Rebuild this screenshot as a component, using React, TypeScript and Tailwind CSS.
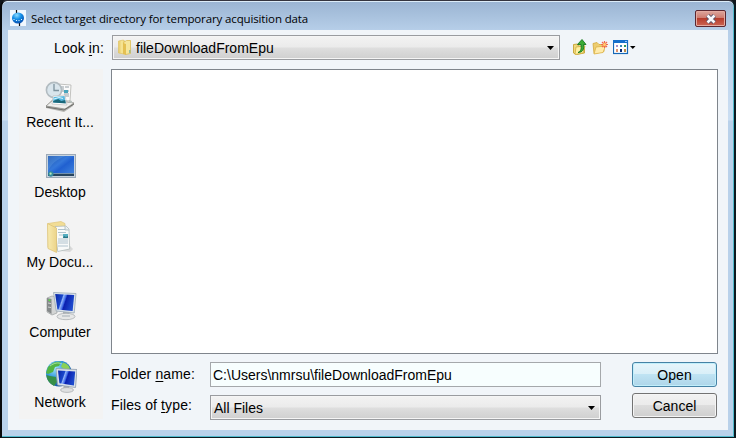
import React from "react";

const ARIAL = "font-['Liberation_Sans',Arial,sans-serif]";

function AppIcon() {
  return (
    <svg width="16" height="16" viewBox="0 0 16 16">
      <defs>
        <radialGradient id="ball" cx=".4" cy=".25" r=".8">
          <stop offset="0" stopColor="#8fdcff" />
          <stop offset=".45" stopColor="#1590e8" />
          <stop offset="1" stopColor="#0545a8" />
        </radialGradient>
      </defs>
      <rect width="16" height="16" fill="#f1f8ff" />
      <path d="M6.5 0v4M9.5 12v4" stroke="#111" strokeWidth="1.2" />
      <ellipse cx="8" cy="8" rx="6" ry="5.6" fill="url(#ball)" />
      <path d="M3.5 9.5h1M6 10.5h1M8.5 10.5h1M11 9.5h1" stroke="#e6f8ff" />
    </svg>
  );
}

function FolderIcon() {
  return (
    <svg width="16" height="18" viewBox="0 0 16 18">
      <defs>
        <linearGradient id="fold" x1="0" x2="1">
          <stop offset="0" stopColor="#e6c967" />
          <stop offset=".6" stopColor="#f8e89a" />
          <stop offset="1" stopColor="#e3c663" />
        </linearGradient>
      </defs>
      <path d="M1.5 2l5-1 1 1v13l-6-1z" fill="url(#fold)" stroke="#e1c464" strokeWidth=".7" />
      <path d="M6.5 3.5l3-2h4v13l-5 1z" fill="#f6e69b" stroke="#dcbd55" strokeWidth=".8" />
      <path d="M6 4v11l3 1V5z" fill="#e4c052" />
      <path d="M12.8 11v3" stroke="#6fae9f" />
    </svg>
  );
}

function RecentIcon() {
  return (
    <svg width="32" height="32" viewBox="0 0 32 32">
      <path d="M1 25l7-7 21 4-1 3-9 6L1 27z" fill="#b5b5b2" />
      <path d="M1 25l7-6 21 3-9 6z" fill="#f0f0ee" stroke="#85857f" strokeWidth=".7" />
      <path d="M1 26l18 3 10-6" fill="none" stroke="#6f6f6c" strokeWidth="1" />
      <path d="M13 3l13 1-1 16-13-1z" fill="#fafafa" stroke="#aaaaa6" strokeWidth=".7" />
      <path d="M15 6h4M15 8h4M20 6h4M15 10h9M19 13h5M20 15h4" stroke="#8a969e" strokeWidth=".9" />
      <path d="M19 9h4v3h-4z" fill="#48a5bd" />
      <circle cx="9" cy="9" r="7.6" fill="#d9e5ec" stroke="#b2bbc0" strokeWidth="1.6" />
      <path d="M9 3v6.5h5" stroke="#7d929d" strokeWidth="1.3" fill="none" />
      <path d="M8 15l12-1 2 10-15-1z" fill="#fff" stroke="#aaa" strokeWidth=".5" />
      <path d="M8.6 16l11-1 1 7-12.5-.5z" fill="#59b8df" />
      <path d="M8.2 20l5-2 3 2 4-1 .7 3.6-12.8-1z" fill="#1b687a" />
      <path d="M9 18l5-1.5 4 1" stroke="#d9f5ff" fill="none" />
      <path d="M24 19l3 1v2l-3-.5z" fill="#b9c2bf" />
    </svg>
  );
}

function DesktopIcon() {
  return (
    <svg width="32" height="32" viewBox="0 0 32 32">
      <defs>
        <linearGradient id="desk" x1="0" y1="0" x2="1" y2="1">
          <stop offset="0" stopColor="#1d52ad" />
          <stop offset=".4" stopColor="#3578da" />
          <stop offset=".55" stopColor="#2060d0" />
          <stop offset="1" stopColor="#4387df" />
        </linearGradient>
      </defs>
      <rect x="1.5" y="3.5" width="29" height="23" fill="#c8d4df" stroke="#9ca9b7" />
      <rect x="3" y="5" width="26" height="20" fill="url(#desk)" />
      <path d="M3 20V5h18C12 8 6 13 3 20z" fill="#79b6ef" opacity=".25" />
      <rect x="3" y="22" width="26" height="3" fill="#26445e" />
      <path d="M8 22.5h21" stroke="#7291ad" />
      <circle cx="5.8" cy="23" r="2.7" fill="#348b9e" />
      <circle cx="5.6" cy="22.7" r="1.1" fill="#b6e8b9" />
    </svg>
  );
}

function DocumentsIcon() {
  return (
    <svg width="32" height="32" viewBox="0 0 32 32">
      <defs>
        <linearGradient id="docs" x1="0" x2="1">
          <stop offset="0" stopColor="#f8ebb0" />
          <stop offset="1" stopColor="#ecd48a" />
        </linearGradient>
      </defs>
      <path d="M8 29l17 2 3-3-3-3z" fill="#c9c9c9" opacity=".6" />
      <path d="M3 2.5l13-2 4 2v23l-9 3-8-2z" fill="#f2dd95" stroke="#dfc67d" strokeWidth=".7" />
      <path d="M10 5.5l11-.5 3 3 .7 20-12 2.5z" fill="#f8faf9" stroke="#a9b4b5" strokeWidth=".7" />
      <path d="M13 8.5h7M13 11.5h8M14 14h4M13 18h10M13 20h10M13 22h10M13 25h10" stroke="#a8bdc8" strokeWidth=".9" />
      <path d="M18 13h5v4h-5z" fill="#55aec0" />
      <path d="M19 15l2 1 2-1v2h-5z" fill="#287585" />
      <path d="M20 5v4h4" fill="#e4ecee" stroke="#a5b1b5" strokeWidth=".7" />
      <path d="M2.5 2.5l9 4.5V31.5l-8.5-4z" fill="url(#docs)" stroke="#dbc073" strokeWidth=".7" />
    </svg>
  );
}

function ScreenDefs() {
  return (
    <svg width="0" height="0" className="absolute">
      <defs>
        <linearGradient id="screen" x1="0" y1="0" x2="1" y2=".3">
          <stop offset="0" stopColor="#0824a5" />
          <stop offset=".38" stopColor="#1a48cc" />
          <stop offset=".44" stopColor="#94b5f8" />
          <stop offset=".55" stopColor="#426fe8" />
          <stop offset=".62" stopColor="#0b20b0" />
          <stop offset="1" stopColor="#1c49cc" />
        </linearGradient>
        <radialGradient id="globe" cx=".35" cy=".3" r=".75">
          <stop offset="0" stopColor="#a3e7ff" />
          <stop offset=".5" stopColor="#3196d9" />
          <stop offset="1" stopColor="#114d99" />
        </radialGradient>
      </defs>
    </svg>
  );
}

function ComputerIcon() {
  return (
    <svg width="32" height="32" viewBox="0 0 32 32">
      <path d="M2 7l5-2 5 1v16l-5 2-5-3z" fill="#d3d5d5" stroke="#9b9f9f" strokeWidth=".7" />
      <path d="M2 7l4.5 1v15L2 20z" fill="#85898a" />
      <path d="M3 12l3 .6M3 16l3 .6" stroke="#cdd1d1" />
      <circle cx="4.5" cy="9.3" r="1" fill="#59df45" />
      <path d="M18 20h6l1 5h-7z" fill="#aeb4b8" />
      <ellipse cx="21" cy="25.5" rx="9" ry="3.2" fill="#e6e7e7" stroke="#a4a8aa" strokeWidth=".7" />
      <path d="M17 25h8" stroke="#a5afb6" />
      <path d="M8.5 1.5l22.5 1-1.8 19.5-18-2z" fill="#dbe4eb" stroke="#9aa8b5" strokeWidth=".8" />
      <path d="M10.2 3l19 1-1.6 16-15.2-1.6z" fill="url(#screen)" />
    </svg>
  );
}

function NetworkIcon() {
  return (
    <svg width="32" height="32" viewBox="0 0 32 32">
      <circle cx="14" cy="12.5" r="13" fill="url(#globe)" />
      <path d="M3 6c4-5 9-6 13-5l-2 4-4 1-2 5-5 2-2-1z" fill="#53b544" />
      <path d="M5 15l6 1 1 5-3 4C4 22 2 19 1.4 14z" fill="#368f48" />
      <path d="M18 1.5c4 1 6 3 7 6l-5 2-4-4z" fill="#8bd156" />
      <path d="M5 5c4-3 8-4 12-2" stroke="#caf4d3" opacity=".65" fill="none" />
      <path d="M19 23l5 1v5h-6z" fill="#aeb2b7" />
      <ellipse cx="22" cy="29" rx="6.5" ry="2.4" fill="#dfe0e1" stroke="#9b9da1" strokeWidth=".6" />
      <path d="M11 7.5l21 1-1.5 18L12.5 24z" fill="#d8e1e9" stroke="#8e9cac" strokeWidth=".8" />
      <path d="M13 9.5l17.2 1-1.3 14-14.5-2.2z" fill="url(#screen)" />
    </svg>
  );
}

function UpFolderIcon() {
  return (
    <svg width="16" height="18" viewBox="0 0 16 18">
      <path d="M1.5 6.5l4-.5 1 2h6v7l-8 1.5-3-1.5z" fill="#f0d87f" stroke="#c6a233" strokeWidth=".9" />
      <path d="M4 9l9-1-2 7-8 1.5z" fill="#fff1a4" stroke="#d1ae3f" strokeWidth=".8" />
      <path d="M6 14.5c3-1 3.5-4 3-8H5.5L10 1.5l4 5h-2.5c1 5-1 8-5.5 8z" fill="#3bab35" stroke="#16771e" strokeWidth=".9" />
    </svg>
  );
}

function NewFolderIcon() {
  return (
    <svg width="17" height="18" viewBox="0 0 17 18">
      <path d="M1 5.5l4-1 2 2h5v7l-10 2z" fill="#edcd70" stroke="#d3a83b" strokeWidth=".8" />
      <path d="M4 9l9.5-1-2.5 6.5-9 1.5z" fill="#ffebab" stroke="#dcb347" strokeWidth=".8" />
      <path d="M12.5 3v7M9 6.5h7M10 4l5 5M15 4l-5 5" stroke="#f2694a" strokeWidth="1.2" />
      <circle cx="12.5" cy="6.5" r="1.5" fill="#ffd070" />
    </svg>
  );
}

function ViewIcon() {
  return (
    <svg width="23" height="15" viewBox="0 0 23 15">
      <rect x=".5" y=".5" width="14" height="13" fill="#fff" stroke="#1668b7" strokeWidth="1.2" />
      <path d="M0 0h15v3H0z" fill="#156fcb" />
      <path d="M12 1.5h2" stroke="#96c8fa" />
      <path d="M3 5h2v2H3z" fill="#a690ca" />
      <path d="M7 5h2v2H7z" fill="#3789bd" />
      <path d="M11 5h2v2h-2z" fill="#2c9656" />
      <path d="M3 9h2v3H3z" fill="#df926c" />
      <path d="M7 9h2v3H7z" fill="#082c76" />
      <path d="M11 9h2v3h-2z" fill="#bb8b47" />
      <path d="M17 6h5.5L19.8 9z" fill="#000" />
    </svg>
  );
}

function Arrow({ className }: { className: string }) {
  return (
    <svg width="7" height="4" viewBox="0 0 7 4" className={className}>
      <path d="M0 0h7L3.5 4z" fill="#000" />
    </svg>
  );
}

const combo =
  "flex items-center border border-[#9a9ca0] bg-[linear-gradient(#f3f3f3_0%,#ebebeb_48%,#dedede_52%,#cfcfcf_100%)] shadow-[inset_0_0_0_1px_#f5f5f5]";

const places = [
  { label: "Recent It...", icon: <RecentIcon /> },
  { label: "Desktop", icon: <DesktopIcon /> },
  { label: "My Docu...", icon: <DocumentsIcon /> },
  { label: "Computer", icon: <ComputerIcon /> },
  { label: "Network", icon: <NetworkIcon /> },
];

export default function App() {
  return (
    <div className="h-[438px] w-[736px] overflow-hidden bg-[#11161b]">
      <ScreenDefs />
      <div
        className={`${ARIAL} flex h-[438px] flex-col rounded-t-[7px] border-t border-r-2 border-b border-l-2 border-t-[#34343e] border-r-[#0b1a20] border-b-[#0b1a20] border-l-[#08090b] bg-[linear-gradient(#9ab4d2_0px,#b7cfe9_30px,#cbdef2_119px,#b9d1ea_120px)] text-[14px] leading-[18px] text-black shadow-[inset_0_1px_0_#dcecf8,inset_-1px_-1px_0_#4fb9cc]`}
      >
        <div className="flex h-[29px] shrink-0 items-start pl-2">
          <div className="mt-[9px]"><AppIcon /></div>
          <div className="mt-[9px] ml-[5px] font-['Open_Sans','Noto_Sans',sans-serif] text-[11.5px] leading-[17px] tracking-[-0.13px] whitespace-nowrap">
            Select target directory for temporary acquisition data
          </div>
          <div className="mt-[9px] mr-[8px] ml-auto flex h-[17px] w-[31px] items-center justify-center rounded-[2px] border border-[#5b2730] bg-[linear-gradient(#dca69d_0%,#cf7c70_45%,#b63d2d_50%,#cc6554_100%)] shadow-[inset_0_0_0_1px_#e4aaa0]">
            <svg width="12" height="10" viewBox="0 0 12 10">
              <path d="M2.5 1.5l7 7M9.5 1.5l-7 7" stroke="#59546a" strokeWidth="4.4" />
              <path d="M2.5 1.5l7 7M9.5 1.5l-7 7" stroke="#f9f9fc" strokeWidth="2.6" />
            </svg>
          </div>
        </div>

        <main className="mx-[6px] flex h-[400px] shrink-0 flex-col bg-[#f1f5f9]">
          <div className="flex h-[39px] shrink-0 items-start pt-[5px]">
            <div className="mt-[4px] w-[96px] text-right tracking-[0.12px]">
              Look <u className="underline-offset-2">i</u>n:
            </div>
            <div className={`${combo} ml-[8px] h-[25px] w-[448px] pl-[4px]`}>
              <FolderIcon />
              <span className="ml-[3px]">fileDownloadFromEpu</span>
              <Arrow className="mr-[5px] ml-auto" />
            </div>
            <div className="mt-[3px] ml-[12px] flex items-center">
              <UpFolderIcon />
              <div className="ml-[4px]"><NewFolderIcon /></div>
              <div className="ml-[4px]"><ViewIcon /></div>
            </div>
          </div>

          <div className="flex">
            <nav className="ml-[11px] h-[350px] w-[84px] shrink-0 bg-[#f3f3f3]">
              {places.map((p) => (
                <div key={p.label} className="flex h-[70px] flex-col items-center pt-[12px]">
                  {p.icon}
                  <span className="whitespace-nowrap pr-[2px]">{p.label}</span>
                </div>
              ))}
            </nav>

            <section className="ml-[8px] w-[607px]">
              <div className="h-[285px] border border-[#7f858c] bg-white" />
              <div className="flex pt-[8px]">
                <div className="w-[99px] tracking-[0.12px]">
                  <div className="mt-[3px]">
                    Folder <u className="underline-offset-2">n</u>ame:
                  </div>
                  <div className="mt-[13px]">
                    Files of <u className="underline-offset-2">t</u>ype:
                  </div>
                </div>
                <div className="w-[391px]">
                  <div className="flex h-[25px] items-center border border-[#a5a8ab] bg-[#f7fefe] pl-[2px]">
                    C:\Users\nmrsu\fileDownloadFromEpu
                  </div>
                  <div className={`${combo} mt-[8px] h-[25px] pl-[3px]`}>
                    All Files
                    <Arrow className="mr-[5px] ml-auto" />
                  </div>
                </div>
                <div className="ml-[31px] w-[85px]">
                  <button className="block h-[25px] w-full rounded-[3px] border border-[#4682a5] bg-[linear-gradient(#e7f5fb_0%,#d9eff8_47%,#bfe3f3_50%,#aed5e9_100%)] tracking-[0.1px] shadow-[inset_0_0_0_1px_#c1effb]">
                    Open
                  </button>
                  <button className="mt-[6px] block h-[25px] w-full rounded-[3px] border border-[#737373] bg-[linear-gradient(#f2f2f2_0%,#ebebeb_47%,#dddddd_50%,#cfcfcf_100%)] shadow-[inset_0_0_0_1px_#f5f5f5]">
                    Cancel
                  </button>
                </div>
              </div>
            </section>
          </div>
        </main>
      </div>
    </div>
  );
}
